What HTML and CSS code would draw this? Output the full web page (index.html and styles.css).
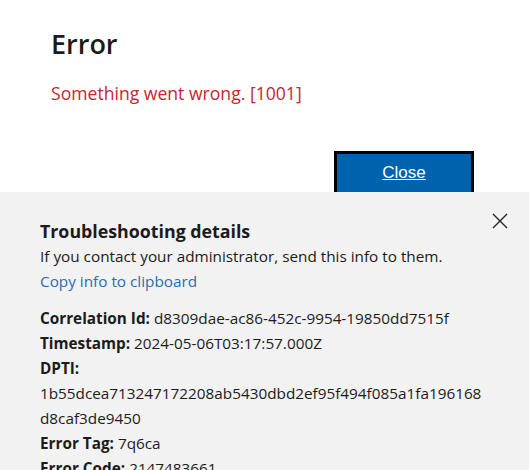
FILE: index.html
```html
<!DOCTYPE html>
<html>
<head>
<meta charset="utf-8">
<link rel="stylesheet" href="styles.css">
</head>
<body>
<div class="page">
  <div class="main">
    <h1 class="title">Error</h1>
    <p class="message">Something went wrong. [1001]</p>
  </div>
  <div class="actions">
    <button class="close-btn"><span>Close</span></button>
  </div>
</div>
<div class="panel">
  <div class="panel-head">
    <div class="head-text">
      <h2 class="panel-title">Troubleshooting details</h2>
      <p class="line">If you contact your administrator, send this info to them.</p>
      <p class="line"><a class="copy">Copy info to clipboard</a></p>
    </div>
    <button class="x-btn" aria-label="Close">
      <svg width="16" height="16" viewBox="0 0 16 16"><path d="M1 1 L15 15 M15 1 L1 15" stroke="#222" stroke-width="1.4" fill="none"/></svg>
    </button>
  </div>
  <div class="details">
    <p class="line"><b>Correlation Id:</b> d8309dae-ac86-452c-9954-19850dd7515f</p>
    <p class="line"><b>Timestamp:</b> 2024-05-06T03:17:57.000Z</p>
    <p class="line"><b>DPTI:</b></p>
    <p class="line">1b55dcea713247172208ab5430dbd2ef95f494f085a1fa196168<br>d8caf3de9450</p>
    <p class="line"><b>Error Tag:</b> 7q6ca</p>
    <p class="line"><b>Error Code:</b> 2147483661</p>
  </div>
</div>
</body>
</html>
```
FILE: styles.css
```css
html, body {
  margin: 0;
  padding: 0;
  background: #fff;
  height: 100%;
  overflow: hidden;
}
body {
  font-family: "Open Sans", "Noto Sans", sans-serif;
  color: #1b1b1b;
  position: relative;
}
.main {
  padding: 26px 0 0 51px;
}
.title {
  margin: 0;
  font-size: 27px;
  font-weight: 600;
  line-height: 36px;
  color: #1b1b1b;
}
.message {
  margin: 19px 0 0;
  font-size: 17.6px;
  line-height: 24px;
  color: #c4262e;
}
.actions {
  display: flex;
  justify-content: flex-end;
  padding: 46px 55px 0 0;
}
.close-btn {
  width: 140px;
  height: 44px;
  background: #0062ad;
  border: 3px solid #000;
  color: #fff;
  font-family: "Liberation Sans", Arial, sans-serif;
  font-size: 17px;
  padding: 0;
}
.close-btn span {
  text-decoration: underline;
}
.panel {
  position: absolute;
  left: 0;
  right: 0;
  top: 192px;
  bottom: 0;
  background: #f2f2f2;
  padding: 21px 20px 0 40px;
}
.panel-head {
  display: flex;
  justify-content: space-between;
  align-items: flex-start;
}
.head-text {
  padding-top: 5px;
}
.panel-title {
  margin: 0;
  font-size: 17.8px;
  font-weight: 700;
  line-height: 26px;
  color: #1b1b1b;
}
.line {
  margin: 0;
  font-size: 15.3px;
  line-height: 25px;
  color: #1b1b1b;
}
.copy {
  color: #2a6db0;
}
.x-btn {
  background: none;
  border: 0;
  padding: 0;
  margin: 0 1px 0 0;
  width: 16px;
  height: 16px;
  display: flex;
}
.details {
  margin-top: 12px;
}
.details b {
  font-weight: 700;
}
```
